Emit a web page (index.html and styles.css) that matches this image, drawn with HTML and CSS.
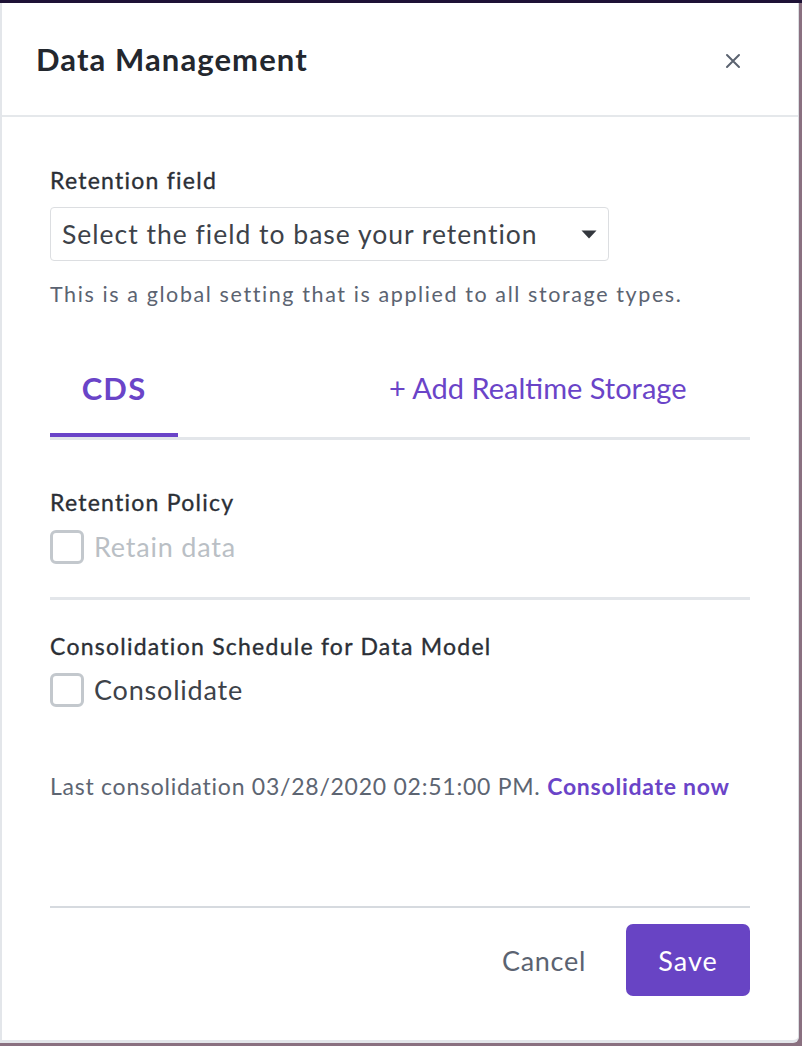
FILE: index.html
```html
<!DOCTYPE html>
<html>
<head>
<meta charset="utf-8">
<link rel="stylesheet" href="styles.css">
</head>
<body>
<div class="modal">
  <div class="modal-header">
    <h1 class="title">Data Management</h1>
    <button class="close" aria-label="Close">
      <svg width="16" height="16" viewBox="0 0 16 16"><path d="M2 2L14 14M14 2L2 14" stroke="#5b6370" stroke-width="2" stroke-linecap="round"/></svg>
    </button>
  </div>
  <div class="modal-body">
    <div class="field">
      <div class="label">Retention field</div>
      <div class="select">
        <span class="select-text">Select the field to base your retention</span>
        <svg class="caret" width="16" height="9" viewBox="0 0 16 9"><path d="M0.5 0.5H15.5L8 8.5Z" fill="#33373d"/></svg>
      </div>
      <div class="help">This is a global setting that is applied to all storage types.</div>
    </div>

    <div class="tabs">
      <div class="tab active">CDS</div>
      <div class="tab add">+ Add Realtime Storage</div>
    </div>

    <div class="section">
      <div class="label">Retention Policy</div>
      <label class="check disabled"><span class="box"></span><span>Retain data</span></label>
    </div>
    <div class="divider"></div>
    <div class="section second">
      <div class="label">Consolidation Schedule for Data Model</div>
      <label class="check"><span class="box"></span><span>Consolidate</span></label>
    </div>
    <div class="last">Last consolidation 03/28/2020 02:51:00 PM. <a class="link">Consolidate now</a></div>
  </div>
  <div class="modal-footer">
    <button class="btn-cancel">Cancel</button>
    <button class="btn-save">Save</button>
  </div>
</div>
</body>
</html>
```

FILE: styles.css
```css
* { box-sizing: border-box; }
html, body { margin: 0; padding: 0; }
body {
  width: 802px;
  height: 1046px;
  overflow: hidden;
  background: linear-gradient(to bottom, #1e1236 0, #1e1236 3px, #8a7080 3px);
  font-family: "Lato", "Liberation Sans", sans-serif;
  padding-top: 3px;
}
.modal {
  width: 799px;
  height: 1040px;
  background: #fff;
  border-left: 2px solid #e3e6ea;
  border-right: 1px solid #dadde1;
  border-bottom: 3px solid #e3e6ea;
  border-bottom-right-radius: 6px;
  display: flex;
  flex-direction: column;
}
.modal-header {
  height: 114px;
  flex: none;
  border-bottom: 2px solid #e5e8eb;
  display: flex;
  align-items: center;
  justify-content: space-between;
  padding: 0 48px 0 34px;
}
.title {
  margin: 0;
  font-size: 31px;
  line-height: 38px;
  font-weight: 700;
  color: #23272e;
  letter-spacing: 1.1px;
}
.close {
  border: 0;
  background: none;
  padding: 0;
  width: 16px;
  height: 16px;
  margin: 4px 9px 0 0;
  display: flex;
}
.modal-body {
  padding: 0 48px;
  flex: 1;
}
.label {
  font-size: 23px;
  font-weight: 400;
  color: #2b2f36;
  letter-spacing: 1.25px;
  line-height: 28px;
  -webkit-text-stroke: 0.35px #2b2f36;
}
.field { padding-top: 49px; }
.select {
  margin-top: 13px;
  width: 559px;
  height: 54px;
  border: 1px solid #dcdee1;
  border-radius: 4px;
  display: flex;
  align-items: center;
  justify-content: space-between;
  padding: 0 11px 0 11px;
}
.select-text {
  font-size: 26.5px;
  color: #3d4249;
  letter-spacing: 1px;
}
.help {
  margin-top: 20px;
  font-size: 21.5px;
  color: #5b6371;
  letter-spacing: 1.6px;
  line-height: 26px;
}
.tabs {
  margin-top: 14px;
  display: flex;
  align-items: flex-end;
  border-bottom: 3px solid #e3e6ea;
}
.tab {
  color: #6a44c8;
  line-height: 38px;
  padding-top: 48px;
  padding-bottom: 30px;
}
.tab.active {
  width: 128px;
  text-align: center;
  font-size: 31px;
  font-weight: 700;
  border-bottom: 4px solid #6a44c8;
  padding-bottom: 26px;
  letter-spacing: 1.2px;
}
.tab.add {
  font-size: 29px;
  margin-left: 211px;
  letter-spacing: 0;
}
.section { padding-top: 48px; }
.section.second { padding-top: 32px; }
.check {
  display: flex;
  align-items: center;
  gap: 10px;
  margin-top: 14px;
  height: 34px;
  line-height: 34px;
  font-size: 27px;
  color: #3d4249;
  letter-spacing: 0.8px;
}
.section.second .check { margin-top: 13px; }
.check.disabled { color: #babfc5; }
.box {
  width: 34px;
  height: 34px;
  border: 3px solid #c3c8cd;
  border-radius: 6px;
  flex: none;
}
.divider {
  margin-top: 33px;
  height: 3px;
  background: #e3e6ea;
}
.last {
  margin-top: 65px;
  font-size: 23px;
  color: #5d6572;
  letter-spacing: 0.75px;
  line-height: 28px;
}
.link {
  color: #6a44c8;
  font-weight: 700;
}
.modal-footer {
  flex: none;
  margin: 0 48px 44px;
  border-top: 2px solid #d6dadf;
  padding-top: 16px;
  display: flex;
  justify-content: flex-end;
  align-items: center;
  gap: 40px;
}
.btn-cancel {
  border: 0;
  background: none;
  font-family: inherit;
  font-size: 27px;
  color: #5b6371;
  letter-spacing: 0.7px;
  padding: 0;
}
.btn-save {
  width: 124px;
  height: 72px;
  border: 0;
  border-radius: 7px;
  background: #6844c4;
  color: #fff;
  font-family: inherit;
  font-size: 27px;
  letter-spacing: 1px;
}
```
